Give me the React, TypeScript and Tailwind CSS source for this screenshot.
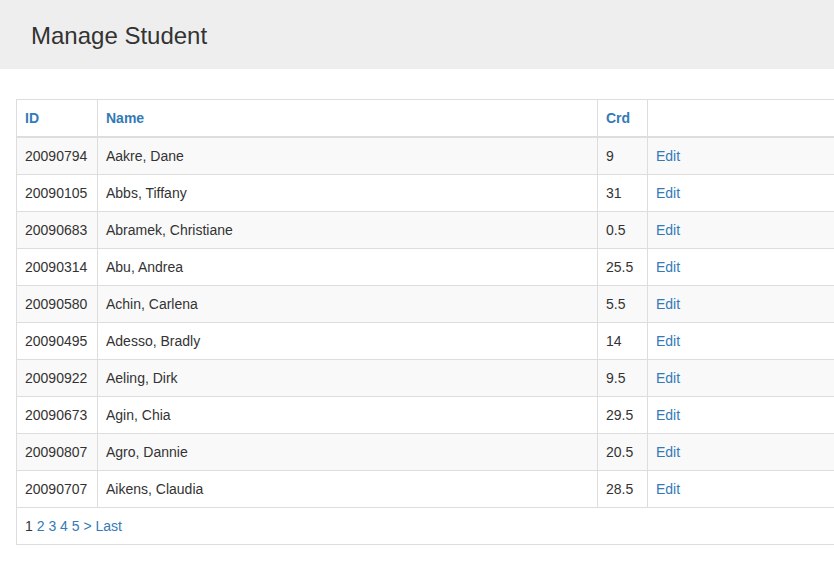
import React from "react";

const rows: [string, string, string][] = [
  ["20090794", "Aakre, Dane", "9"],
  ["20090105", "Abbs, Tiffany", "31"],
  ["20090683", "Abramek, Christiane", "0.5"],
  ["20090314", "Abu, Andrea", "25.5"],
  ["20090580", "Achin, Carlena", "5.5"],
  ["20090495", "Adesso, Bradly", "14"],
  ["20090922", "Aeling, Dirk", "9.5"],
  ["20090673", "Agin, Chia", "29.5"],
  ["20090807", "Agro, Dannie", "20.5"],
  ["20090707", "Aikens, Claudia", "28.5"],
];

export default function App() {
  return (
    <div
      className="w-[834px] h-[563px] overflow-hidden bg-white text-[#333] text-[14px] leading-[20px]"
      style={{ fontFamily: '"Liberation Sans", Arial, sans-serif' }}
    >
      <div className="h-[69px] bg-[#eeeeee] flex items-center pl-[31px]">
        <h1 className="text-[24px] leading-[26px] font-normal text-[#333] pt-[2px]">Manage Student</h1>
      </div>
      <div className="pt-[30px] pl-[16px]">
        <table className="w-[900px] border-collapse border border-[#ddd]">
          <thead>
            <tr className="border-b-2 border-[#ddd]">
              <th className="w-[81px] text-left font-bold px-[8px] py-[8px] border border-[#ddd] border-b-2 text-[#337ab7]">ID</th>
              <th className="w-[500px] text-left font-bold px-[8px] py-[8px] border border-[#ddd] border-b-2 text-[#337ab7]">Name</th>
              <th className="w-[50px] text-left font-bold px-[8px] py-[8px] border border-[#ddd] border-b-2 text-[#337ab7]">Crd</th>
              <th className="text-left font-bold px-[8px] py-[8px] border border-[#ddd] border-b-2"></th>
            </tr>
          </thead>
          <tbody>
            {rows.map((r, i) => (
              <tr key={r[0]} className={i % 2 === 0 ? "bg-[#f9f9f9]" : "bg-white"}>
                <td className="px-[8px] py-[8px] border border-[#ddd]">{r[0]}</td>
                <td className="px-[8px] py-[8px] border border-[#ddd]">{r[1]}</td>
                <td className="px-[8px] py-[8px] border border-[#ddd]">{r[2]}</td>
                <td className="px-[8px] py-[8px] border border-[#ddd]">
                  <a className="text-[#337ab7]" href="#">Edit</a>
                </td>
              </tr>
            ))}
            <tr className="bg-white">
              <td colSpan={4} className="px-[8px] py-[8px] border border-[#ddd]">
                <span>1</span> <a className="text-[#337ab7]" href="#">2</a>{" "}
                <a className="text-[#337ab7]" href="#">3</a>{" "}
                <a className="text-[#337ab7]" href="#">4</a>{" "}
                <a className="text-[#337ab7]" href="#">5</a>{" "}
                <a className="text-[#337ab7]" href="#">&gt;</a>{" "}
                <a className="text-[#337ab7]" href="#">Last</a>
              </td>
            </tr>
          </tbody>
        </table>
      </div>
    </div>
  );
}
